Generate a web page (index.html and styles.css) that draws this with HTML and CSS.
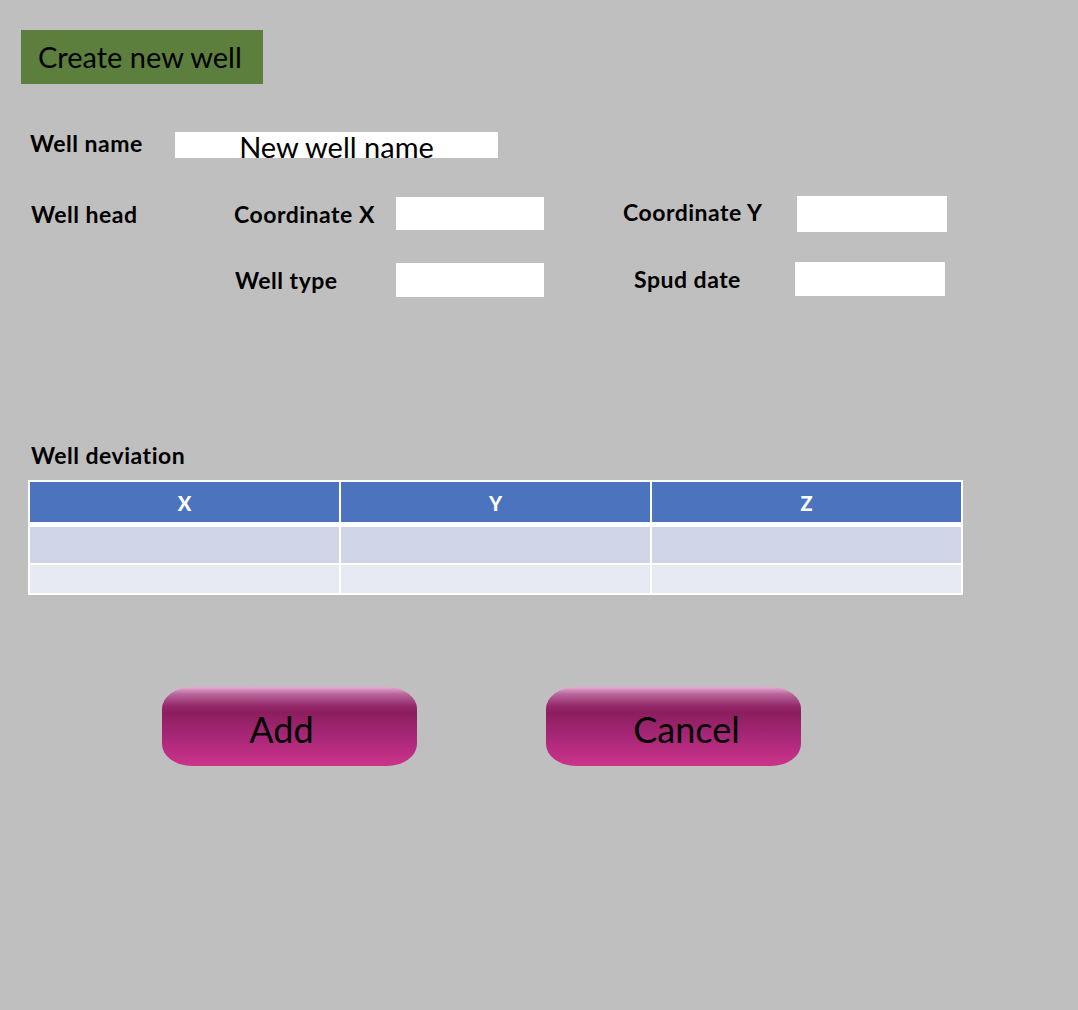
FILE: index.html
```html
<!DOCTYPE html>
<html>
<head>
<meta charset="utf-8">
<link rel="stylesheet" href="styles.css">
</head>
<body>
<div class="page">
  <div class="title">Create new well</div>

  <div class="row row-name">
    <div class="label lbl-name">Well name</div>
    <div class="input input-name">New well name</div>
  </div>

  <div class="row row-head">
    <div class="label lbl-head">Well head</div>
    <div class="label lbl-cx">Coordinate X</div>
    <div class="input input-cx"></div>
    <div class="label lbl-cy">Coordinate Y</div>
    <div class="input input-cy"></div>
  </div>

  <div class="row row-type">
    <div class="label lbl-type">Well type</div>
    <div class="input input-type"></div>
    <div class="label lbl-spud">Spud date</div>
    <div class="input input-spud"></div>
  </div>

  <div class="label lbl-dev">Well deviation</div>

  <table class="dev">
    <thead>
      <tr><th>X</th><th>Y</th><th>Z</th></tr>
    </thead>
    <tbody>
      <tr class="r1"><td></td><td></td><td></td></tr>
      <tr class="r2"><td></td><td></td><td></td></tr>
    </tbody>
  </table>

  <div class="buttons">
    <div class="btn btn-add">Add</div>
    <div class="btn btn-cancel">Cancel</div>
  </div>
</div>
</body>
</html>
```

FILE: styles.css
```css
html, body {
  margin: 0;
  padding: 0;
  background: #bfbfbf;
}
body {
  font-family: Lato, "Open Sans", "Liberation Sans", sans-serif;
  color: #000;
  width: 1078px;
  height: 1010px;
}
.page {
  padding-top: 30px;
}
.title {
  margin-left: 21px;
  width: 225px;
  height: 54px;
  padding-left: 17px;
  background: #5c7f3d;
  font-size: 29px;
  line-height: 54px;
  box-sizing: content-box;
  white-space: nowrap;
}
.row {
  display: flex;
  align-items: center;
}
.label {
  font-weight: bold;
  font-size: 23px;
  letter-spacing: 0.5px;
  white-space: nowrap;
}
.input {
  background: #fff;
}
.row-name {
  margin-top: 48px;
  height: 26px;
}
.lbl-name {
  margin-left: 30px;
  width: 145px;
  margin-top: -4px;
}
.input-name {
  width: 323px;
  height: 26px;
  font-size: 29px;
  line-height: 29px;
  text-align: center;
  white-space: nowrap;
}
.row-head {
  margin-top: 38px;
  height: 36px;
}
.lbl-head {
  margin-left: 31px;
  width: 203px;
}
.lbl-cx {
  width: 162px;
}
.input-cx {
  width: 148px;
  height: 33px;
  align-self: flex-start;
  margin-top: 1px;
}
.lbl-cy {
  margin-left: 79px;
  width: 174px;
  margin-top: -4px;
}
.input-cy {
  width: 150px;
  height: 36px;
  align-self: flex-start;
}
.row-type {
  margin-top: 30px;
  height: 35px;
}
.lbl-type {
  margin-left: 235px;
  width: 161px;
}
.input-type {
  width: 148px;
  height: 34px;
}
.lbl-spud {
  margin-left: 90px;
  width: 161px;
  margin-top: -2px;
}
.input-spud {
  width: 150px;
  height: 34px;
  margin-top: -2px;
}
.lbl-dev {
  margin-left: 31px;
  margin-top: 145px;
  line-height: 26px;
}
.dev {
  margin-left: 28px;
  margin-top: 12px;
  width: 935px;
  border-collapse: collapse;
  border: 2px solid #fff;
  table-layout: fixed;
}
.dev th, .dev td {
  border: 2px solid #fff;
  padding: 0;
}
.dev th {
  background: #4c73be;
  color: #fff;
  font-size: 20px;
  font-weight: 900;
  height: 38px;
  border-bottom-width: 5px;
  padding-top: 2px;
}
.dev .r1 td {
  background: #cfd5e7;
  height: 36px;
}
.dev .r2 td {
  background: #e8eaf3;
  height: 28px;
}
.buttons {
  display: flex;
  margin-top: 92px;
  margin-left: 162px;
  gap: 129px;
}
.btn {
  width: 255px;
  height: 79px;
  border-radius: 30px / 22px;
  background: linear-gradient(to bottom, #e8a9d6 0%, #b8669b 9%, #94296a 24%, #8b1e5d 32%, #a9287a 65%, #cc3389 100%);
  font-family: Lato, "Open Sans", sans-serif;
  font-size: 36px;
  line-height: 84px;
  text-align: center;
  color: #000;
  white-space: nowrap;
}
.btn-add {
  text-indent: -16px;
}
.btn-cancel {
  text-indent: 26px;
}
```
